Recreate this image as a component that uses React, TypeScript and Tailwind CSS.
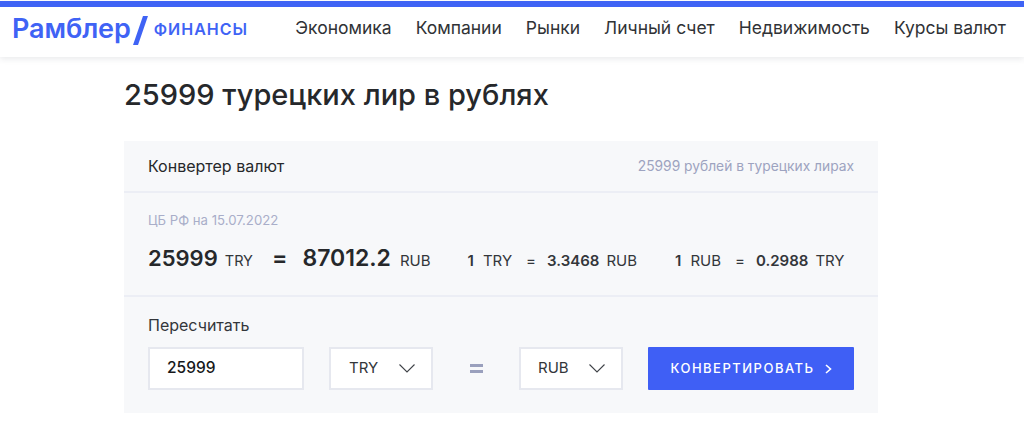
const navItems = ["Экономика", "Компании", "Рынки", "Личный счет", "Недвижимость", "Курсы валют"];

const Chevron = () => (
  <svg width="16" height="9" viewBox="0 0 16 9" fill="none" stroke="#3f4348" strokeWidth="1.1">
    <path d="M0.5 0.5L8 8L15.5 0.5" />
  </svg>
);

const Select = ({ value, className }: { value: string; className: string }) => (
  <div className={`flex h-[43px] w-[104px] items-center justify-between border-2 border-[#e6e8ef] bg-white pr-[16px] text-[15px] text-[#33363a] ${className}`}>
    <span>{value}</span>
    <Chevron />
  </div>
);

const Rate = ({ from, value, to, className }: { from: string; value: string; to: string; className: string }) => (
  <div className={`flex items-baseline text-[15px] text-[#33363a] ${className}`}>
    <span className="font-semibold">1</span>
    <span className="ml-[9px]">{from}</span>
    <span className="ml-[14px]">=</span>
    <span className="ml-[11px] font-semibold">{value}</span>
    <span className="ml-[7px]">{to}</span>
  </div>
);

export default function App() {
  return (
    <div className="h-[436px] w-[1024px] overflow-hidden bg-white pt-px font-['Inter',sans-serif] text-[#26282b]">
      <header className="h-[56px] border-t-[6px] border-[#3f63f5] bg-white shadow-[0_2px_6px_rgba(40,50,70,0.1)]">
        <div className="flex h-[43px] items-center justify-between pl-[12px] pr-[18px]">
          <div className="flex items-center text-[#3f63f5]">
            <span className="text-[27px] font-semibold leading-none tracking-[-0.1px]">Рамблер</span>
            <svg className="ml-[2px] mt-[3px]" width="15" height="29" viewBox="0 0 15 29" fill="#3f63f5">
              <path d="M10 0H15L5 29H0Z" />
            </svg>
            <span className="ml-[6px] mt-[1px] text-[16px] font-semibold tracking-[1px]">ФИНАНСЫ</span>
          </div>
          <nav className="flex gap-[24px] text-[17.5px] text-[#303236]">
            {navItems.map((item) => (
              <a key={item}>{item}</a>
            ))}
          </nav>
        </div>
      </header>
      <main className="ml-[124px] w-[754px]">
        <h1 className="pt-[18px] text-[29px] font-medium leading-[40px] text-[#26282b]">25999 турецких лир в рублях</h1>
        <section className="mt-[26px] h-[272px] bg-[#f7f8fa]">
          <div className="flex h-[52px] items-center justify-between border-b-2 border-[#eceef5] px-[24px]">
            <span className="text-[16px] font-normal">Конвертер валют</span>
            <span className="text-[13.8px] text-[#9da3c0]">25999 рублей в турецких лирах</span>
          </div>
          <div className="h-[104px] border-b-2 border-[#eceef5] px-[24px] pt-[19px]">
            <div className="text-[13.2px] leading-[16px] text-[#a9aec9]">ЦБ РФ на 15.07.2022</div>
            <div className="mt-[13px] flex items-baseline">
              <span className="text-[22px] font-semibold">25999</span>
              <span className="ml-[7px] text-[14.5px] text-[#33363a]">TRY</span>
              <span className="ml-[19px] text-[23px] font-semibold">=</span>
              <span className="ml-[15px] text-[23px] font-semibold">87012.2</span>
              <span className="ml-[9px] text-[15px] text-[#33363a]">RUB</span>
              <Rate from="TRY" value="3.3468" to="RUB" className="ml-[37px]" />
              <Rate from="RUB" value="0.2988" to="TRY" className="ml-[38px]" />
            </div>
          </div>
          <div className="px-[24px] pt-[18px]">
            <div className="text-[16px] leading-[20px] text-[#33363a]">Пересчитать</div>
            <div className="mt-[12px] flex items-center">
              <div className="flex h-[43px] w-[156px] items-center border-2 border-[#e6e8ef] bg-white pb-[1px] pl-[17px] text-[15.5px] font-medium text-[#17181a]">25999</div>
              <Select value="TRY" className="ml-[25px] pl-[18px]" />
              <div className="ml-[37px] flex w-[13px] flex-col gap-[3px]">
                <span className="h-[3px] bg-[#9aa0bd]" />
                <span className="h-[3px] bg-[#9aa0bd]" />
              </div>
              <Select value="RUB" className="ml-[36px] pl-[17px]" />
              <button className="ml-[25px] flex h-[43px] w-[206px] items-center justify-center gap-[10px] rounded-[1px] bg-[#3f5ff5] text-[13px] font-medium tracking-[1.5px] text-white">
                КОНВЕРТИРОВАТЬ
                <svg width="7" height="10" viewBox="0 0 7 10" fill="none" stroke="white" strokeWidth="1.6">
                  <path d="M1 1L5.5 5L1 9" />
                </svg>
              </button>
            </div>
          </div>
        </section>
      </main>
    </div>
  );
}
